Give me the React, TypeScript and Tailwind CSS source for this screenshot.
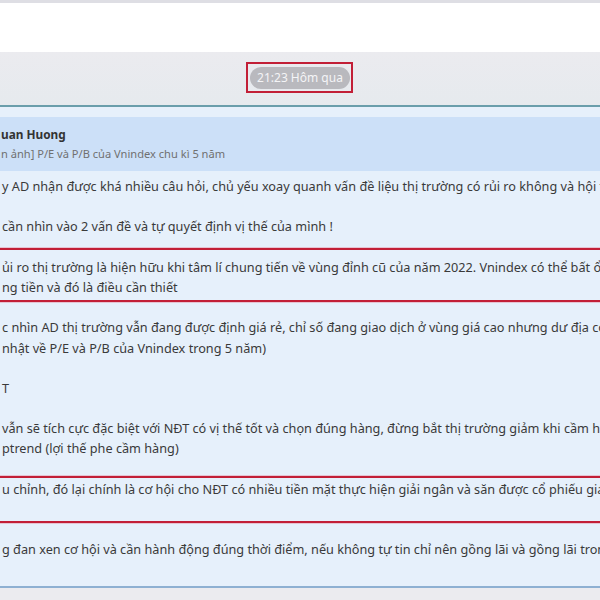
import React from "react";

const Line = ({ children }: { children?: React.ReactNode }) => (
  <div className="h-[20.2px] leading-[20.2px] whitespace-nowrap">{children ?? "\u00a0"}</div>
);

export default function App() {
  return (
    <div
      className="w-[600px] h-[600px] overflow-hidden bg-[#ebebef] text-[#3a3a3a]"
      style={{ fontFamily: '"Noto Sans", "Open Sans", sans-serif' }}
    >
      <div className="h-[52px] bg-white border-t-[3px] border-[#dedee4]" />
      <div className="h-[53px] flex justify-center items-start pt-[15px] bg-gradient-to-b from-[#ebebef] to-[#e6eaee]">
        <div className="relative">
          <div className="absolute -left-[4px] -right-[3px] -top-[5px] -bottom-[4px] border-2 border-[#c21f37]" />
          <div className="w-[100px] h-[22px] rounded-full bg-[#b9b9be] text-[#f4f4f6] text-[12px] leading-[22px] text-center">
            21:23 Hôm qua
          </div>
        </div>
      </div>
      <div className="border-t-2 border-b-2 border-t-[#6a9eab] border-b-[#8eb0d2] bg-[#e6f0fb] h-[483px] pt-[10px] text-[12.7px]">
        <div className="h-[54px] bg-[#cce0f8] flex flex-col justify-center pl-[1px]">
          <div className="font-bold text-[11.8px] text-[#333] leading-[18px]">uan Huong</div>
          <div className="text-[11.1px] text-[#707070] leading-[18px] mt-[2px]">n ảnh] P/E và P/B của Vnindex chu kì 5 năm</div>
        </div>
        <div className="pt-[5px] pl-[2px]">
          <Line>y AD nhận được khá nhiều câu hỏi, chủ yếu xoay quanh vấn đề liệu thị trường có rủi ro không và hội tụ</Line>
          <Line />
          <Line>cần nhìn vào 2 vấn đề và tự quyết định vị thế của mình !</Line>
          <Line />
          <div className="relative">
            <div className="absolute -left-[10px] -right-[10px] -top-[9px] -bottom-[5px] border-2 border-[#c21f37] shadow-[0_0_0_1px_rgba(230,140,160,0.45)]" />
            <Line>ủi ro thị trường là hiện hữu khi tâm lí chung tiến về vùng đỉnh cũ của năm 2022. Vnindex có thể bất ổn</Line>
            <Line>ng tiền và đó là điều cần thiết</Line>
          </div>
          <Line />
          <Line>c nhìn AD thị trường vẫn đang được định giá rẻ, chỉ số đang giao dịch ở vùng giá cao nhưng dư địa còn</Line>
          <Line>nhật về P/E và P/B của Vnindex trong 5 năm)</Line>
          <Line />
          <Line>T</Line>
          <Line />
          <Line>vẫn sẽ tích cực đặc biệt với NĐT có vị thế tốt và chọn đúng hàng, đừng bắt thị trường giảm khi cầm hàng</Line>
          <Line>ptrend (lợi thế phe cầm hàng)</Line>
          <Line />
          <div className="relative">
            <div className="absolute -left-[10px] -right-[10px] -top-[3px] -bottom-[4px] border-2 border-[#c21f37] shadow-[0_0_0_1px_rgba(230,140,160,0.45)]" />
            <Line>u chỉnh, đó lại chính là cơ hội cho NĐT có nhiều tiền mặt thực hiện giải ngân và săn được cổ phiếu giá</Line>
            <Line />
          </div>
          <Line />
          <Line>g đan xen cơ hội và cần hành động đúng thời điểm, nếu không tự tin chỉ nên gồng lãi và gồng lãi trong</Line>
          <Line />
        </div>
      </div>
    </div>
  );
}
